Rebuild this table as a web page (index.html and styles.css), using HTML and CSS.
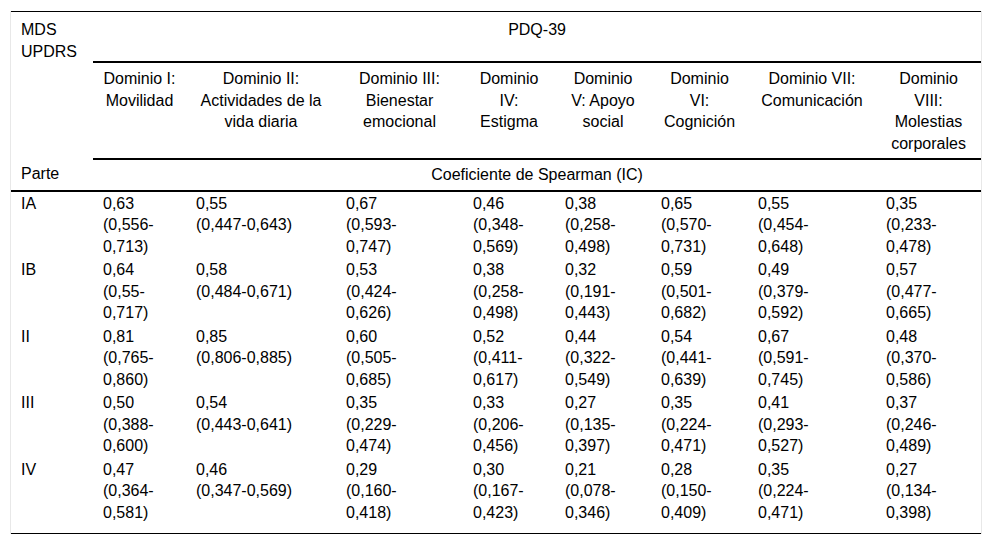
FILE: index.html
```html
<!DOCTYPE html>
<html lang="es">
<head>
<meta charset="utf-8">
<title>MDS UPDRS / PDQ-39</title>
<link rel="stylesheet" href="styles.css">
</head>
<body>
<div class="wrap">
<table class="tbl">
<colgroup>
<col class="c1"><col class="c2"><col class="c3"><col class="c4"><col class="c5"><col class="c6"><col class="c7"><col class="c8"><col class="c9">
</colgroup>
<thead>
<tr class="r1"><th class="left">MDS UPDRS</th><th colspan="8">PDQ-39</th></tr>
<tr class="r2"><th class="left"></th><th class="ln">Dominio I: Movilidad</th><th class="ln">Dominio II: Actividades de la vida diaria</th><th class="ln">Dominio III: Bienestar emocional</th><th class="ln">Dominio IV: Estigma</th><th class="ln">Dominio V: Apoyo social</th><th class="ln">Dominio VI: Cognición</th><th class="ln">Dominio VII: Comunicación</th><th class="ln">Dominio VIII: Molestias corporales</th></tr>
<tr class="r3"><th class="left">Parte</th><th colspan="8">Coeficiente de Spearman (IC)</th></tr>
</thead>
<tbody>
<tr><td>IA</td><td>0,63<br>(0,556-0,713)</td><td>0,55<br>(0,447-0,643)</td><td>0,67<br>(0,593-0,747)</td><td>0,46<br>(0,348-0,569)</td><td>0,38<br>(0,258-0,498)</td><td>0,65<br>(0,570-0,731)</td><td>0,55<br>(0,454-0,648)</td><td>0,35<br>(0,233-0,478)</td></tr>
<tr><td>IB</td><td>0,64<br>(0,55-0,717)</td><td>0,58<br>(0,484-0,671)</td><td>0,53<br>(0,424-0,626)</td><td>0,38<br>(0,258-0,498)</td><td>0,32<br>(0,191-0,443)</td><td>0,59<br>(0,501-0,682)</td><td>0,49<br>(0,379-0,592)</td><td>0,57<br>(0,477-0,665)</td></tr>
<tr><td>II</td><td>0,81<br>(0,765-0,860)</td><td>0,85<br>(0,806-0,885)</td><td>0,60<br>(0,505-0,685)</td><td>0,52<br>(0,411-0,617)</td><td>0,44<br>(0,322-0,549)</td><td>0,54<br>(0,441-0,639)</td><td>0,67<br>(0,591-0,745)</td><td>0,48<br>(0,370-0,586)</td></tr>
<tr><td>III</td><td>0,50<br>(0,388-0,600)</td><td>0,54<br>(0,443-0,641)</td><td>0,35<br>(0,229-0,474)</td><td>0,33<br>(0,206-0,456)</td><td>0,27<br>(0,135-0,397)</td><td>0,35<br>(0,224-0,471)</td><td>0,41<br>(0,293-0,527)</td><td>0,37<br>(0,246-0,489)</td></tr>
<tr class="last"><td>IV</td><td>0,47<br>(0,364-0,581)</td><td>0,46<br>(0,347-0,569)</td><td>0,29<br>(0,160-0,418)</td><td>0,30<br>(0,167-0,423)</td><td>0,21<br>(0,078-0,346)</td><td>0,28<br>(0,150-0,409)</td><td>0,35<br>(0,224-0,471)</td><td>0,27<br>(0,134-0,398)</td></tr>
</tbody>
</table>
</div>
</body>
</html>
```

FILE: styles.css
```css
body {
  margin: 11px 0 0 10px;
  background: #fff;
  color: #000;
  font-family: "Liberation Sans", Arial, sans-serif;
  font-size: 16px;
}

.wrap {
  width: 970px;
  border-left: 1px solid #e8e8e8;
  border-right: 1px solid #e8e8e8;
}

.tbl {
  width: 970px;
  table-layout: fixed;
  border-collapse: collapse;
  line-height: 21.5px;
  border-top: 1px solid #000;
  border-bottom: 1px solid #000;
}

.c1 { width: 82px; }
.c2 { width: 93px; }
.c3 { width: 150px; }
.c4 { width: 127px; }
.c5 { width: 92px; }
.c6 { width: 96px; }
.c7 { width: 97px; }
.c8 { width: 128px; }
.c9 { width: 105px; }

th {
  font-weight: normal;
  text-align: center;
  vertical-align: top;
  padding: 0 10px;
}

th.left {
  text-align: left;
}

.r1 th {
  padding-top: 7px;
  padding-bottom: 0;
}

.r1 th + th {
  border-bottom: 2px solid #000;
}

.r2 th {
  padding-top: 5px;
  padding-bottom: 4px;
}

.r2 th.ln {
  border-bottom: 2px solid #000;
}

.r3 th {
  padding-top: 4px;
  padding-bottom: 4px;
  border-bottom: 2px solid #000;
}

td {
  vertical-align: top;
  text-align: left;
  padding: 1px 30px 1px 10px;
}

.last td {
  padding-bottom: 10px;
}
```
